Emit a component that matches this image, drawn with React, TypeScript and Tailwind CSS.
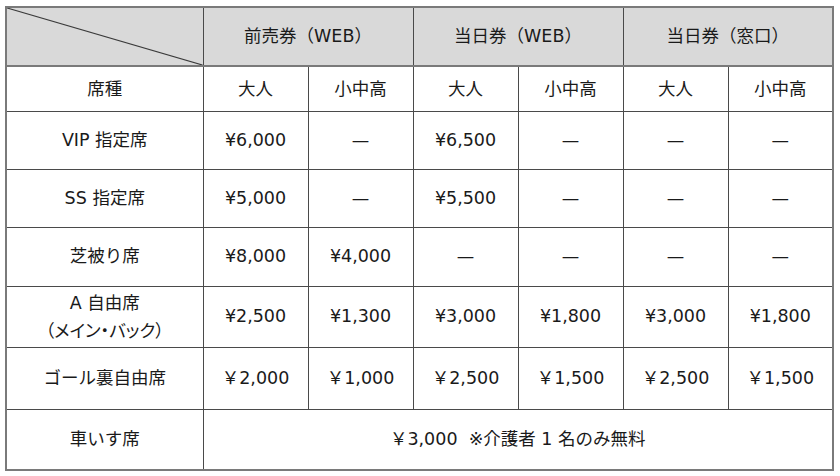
const cell = "border border-[#4a4a4a] text-center align-middle";

type Row = { label: React.ReactNode; prices: string[]; h: string };

const rows: Row[] = [
  { label: "VIP 指定席", prices: ["¥6,000", "—", "¥6,500", "—", "—", "—"], h: "h-[58px]" },
  { label: "SS 指定席", prices: ["¥5,000", "—", "¥5,500", "—", "—", "—"], h: "h-[58px]" },
  { label: "芝被り席", prices: ["¥8,000", "¥4,000", "—", "—", "—", "—"], h: "h-[59px]" },
  {
    label: (
      <div className="leading-[28px]">
        <div>A 自由席</div>
        <div className="[font-feature-settings:'palt']">（メイン・バック）</div>
      </div>
    ),
    prices: ["¥2,500", "¥1,300", "¥3,000", "¥1,800", "¥3,000", "¥1,800"],
    h: "h-[61px]",
  },
  {
    label: "ゴール裏自由席",
    prices: ["￥2,000", "￥1,000", "￥2,500", "￥1,500", "￥2,500", "￥1,500"],
    h: "h-[62px]",
  },
];

export default function App() {
  return (
    <div
      className="w-[840px] h-[476px] bg-white pl-[5px] pt-[6px] text-[17.5px] text-[#1a1a1a]"
      style={{ fontFamily: '"DejaVu Sans", "Noto Sans CJK JP", sans-serif' }}
    >
      <table className="table-fixed border-collapse w-[827px] border-2 border-[#7a7a7a]">
        <colgroup>
          <col className="w-[197px]" />
          <col className="w-[105px]" />
          <col className="w-[105px]" />
          <col className="w-[105px]" />
          <col className="w-[105px]" />
          <col className="w-[105px]" />
          <col className="w-[105px]" />
        </colgroup>
        <tbody>
          <tr className="h-[59px] bg-[#d9d9d9] border-b-2 border-b-[#7a7a7a]">
            <td className={`${cell} relative p-0`}>
              <svg
                className="absolute inset-0 w-full h-full"
                viewBox="0 0 100 100"
                preserveAspectRatio="none"
              >
                <line
                  x1="0"
                  y1="0"
                  x2="100"
                  y2="100"
                  stroke="#3a3a3a"
                  strokeWidth="1.2"
                  vectorEffect="non-scaling-stroke"
                />
              </svg>
            </td>
            <td colSpan={2} className={cell}>前売券（WEB）</td>
            <td colSpan={2} className={cell}>当日券（WEB）</td>
            <td colSpan={2} className={cell}>当日券（窓口）</td>
          </tr>
          <tr className="h-[45px]">
            <td className={cell}>席種</td>
            <td className={cell}>大人</td>
            <td className={cell}>小中高</td>
            <td className={cell}>大人</td>
            <td className={cell}>小中高</td>
            <td className={cell}>大人</td>
            <td className={cell}>小中高</td>
          </tr>
          {rows.map((r, i) => (
            <tr key={i} className={r.h}>
              <td className={cell}>{r.label}</td>
              {r.prices.map((p, j) => (
                <td key={j} className={cell}>
                  {p}
                </td>
              ))}
            </tr>
          ))}
          <tr className="h-[61px]">
            <td className={cell}>車いす席</td>
            <td colSpan={6} className={cell}>
              ￥3,000&nbsp;&nbsp;※介護者 1 名のみ無料
            </td>
          </tr>
        </tbody>
      </table>
    </div>
  );
}
